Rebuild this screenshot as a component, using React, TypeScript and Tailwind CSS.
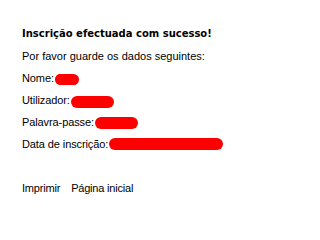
function Blob({ w, h, dy = 0 }: { w: number; h: number; dy?: number }) {
  return (
    <svg
      width={w}
      height={h}
      viewBox={`0 0 ${w} ${h}`}
      className="inline-block align-middle"
      style={{ transform: `translateY(${dy}px)` }}
    >
      <rect x={0} y={0} width={w} height={h} rx={h / 2} ry={h / 2} fill="#ff0000" />
      <ellipse cx={w * 0.3} cy={h * 0.45} rx={w * 0.28} ry={h * 0.5} fill="#ff0000" />
      <ellipse cx={w * 0.7} cy={h * 0.55} rx={w * 0.28} ry={h * 0.48} fill="#ff0000" />
    </svg>
  );
}

export default function App() {
  return (
    <div
      className="bg-white w-[313px] h-[236px] pt-[23px] pl-[22px] text-black text-[11px] leading-[22px]"
      style={{ fontFamily: '"Liberation Sans", Arial, sans-serif' }}
    >
      <div className="font-bold text-[10px]" style={{ fontFamily: '"DejaVu Sans", sans-serif' }}>
        Inscrição efectuada com sucesso!
      </div>
      <div>Por favor guarde os dados seguintes:</div>
      <div className="flex items-center">
        <span className="tracking-[-0.1px]">Nome:</span>
        <span className="ml-[1px]"><Blob w={24} h={11} dy={0} /></span>
      </div>
      <div className="flex items-center">
        <span className="tracking-[-0.1px]">Utilizador:</span>
        <span className="ml-[1px]"><Blob w={43} h={12} dy={1} /></span>
      </div>
      <div className="flex items-center">
        <span className="tracking-[-0.1px]">Palavra-passe:</span>
        <span className="ml-[1px]"><Blob w={43} h={12} dy={0} /></span>
      </div>
      <div className="flex items-center">
        <span className="tracking-[-0.1px]">Data de inscrição:</span>
        <span className="ml-[1px]"><Blob w={114} h={12} dy={-1} /></span>
      </div>
      <div className="h-[22px]" />
      <div className="flex gap-[11px] tracking-[-0.2px]">
        <a className="cursor-pointer">Imprimir</a>
        <a className="cursor-pointer">Página inicial</a>
      </div>
    </div>
  );
}
